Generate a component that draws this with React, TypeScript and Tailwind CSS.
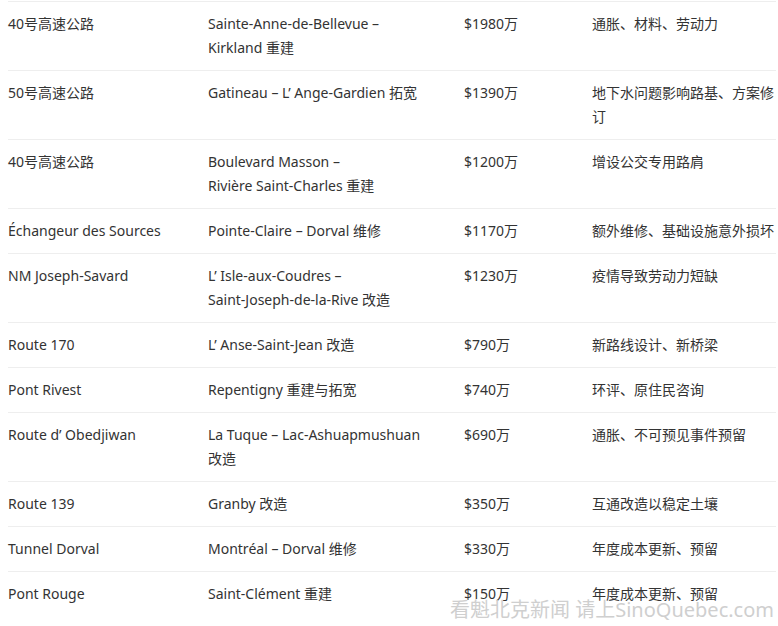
const rows: { name: string; project: string[]; cost: string; reason: string[] }[] = [
  { name: '40号高速公路', project: ['Sainte-Anne-de-Bellevue –', 'Kirkland 重建'], cost: '$1980万', reason: ['通胀、材料、劳动力'] },
  { name: '50号高速公路', project: ['Gatineau – L’ Ange-Gardien 拓宽'], cost: '$1390万', reason: ['地下水问题影响路基、方案修', '订'] },
  { name: '40号高速公路', project: ['Boulevard Masson –', 'Rivière Saint-Charles 重建'], cost: '$1200万', reason: ['增设公交专用路肩'] },
  { name: 'Échangeur des Sources', project: ['Pointe-Claire – Dorval 维修'], cost: '$1170万', reason: ['额外维修、基础设施意外损坏'] },
  { name: 'NM Joseph-Savard', project: ['L’ Isle-aux-Coudres –', 'Saint-Joseph-de-la-Rive 改造'], cost: '$1230万', reason: ['疫情导致劳动力短缺'] },
  { name: 'Route 170', project: ['L’ Anse-Saint-Jean 改造'], cost: '$790万', reason: ['新路线设计、新桥梁'] },
  { name: 'Pont Rivest', project: ['Repentigny 重建与拓宽'], cost: '$740万', reason: ['环评、原住民咨询'] },
  { name: 'Route d’ Obedjiwan', project: ['La Tuque – Lac-Ashuapmushuan', '改造'], cost: '$690万', reason: ['通胀、不可预见事件预留'] },
  { name: 'Route 139', project: ['Granby 改造'], cost: '$350万', reason: ['互通改造以稳定土壤'] },
  { name: 'Tunnel Dorval', project: ['Montréal – Dorval 维修'], cost: '$330万', reason: ['年度成本更新、预留'] },
  { name: 'Pont Rouge', project: ['Saint-Clément 重建'], cost: '$150万', reason: ['年度成本更新、预留'] },
];

function Lines({ lines }: { lines: string[] }) {
  return (
    <>
      {lines.map((l, i) => (
        <div key={i} className="whitespace-nowrap">
          {l}
        </div>
      ))}
    </>
  );
}

export default function App() {
  return (
    <div
      className="relative h-[626px] w-[778px] overflow-hidden bg-white text-[14px] leading-6 text-[#333]"
      style={{ fontFamily: '"Noto Sans", "Noto Sans CJK SC", sans-serif' }}
    >
      <div className="ml-2 w-[768px] border-t border-[#eeeeee] mt-px">
        {rows.map((r, i) => (
          <div
            key={i}
            className="grid grid-cols-[200px_256px_128px_184px] border-b border-[#eeeeee] py-2.5 last:border-b-0"
          >
            <div>{r.name}</div>
            <div>
              <Lines lines={r.project} />
            </div>
            <div>{r.cost}</div>
            <div>
              <Lines lines={r.reason} />
            </div>
          </div>
        ))}
      </div>
      {/* site watermark */}
      <div className="absolute right-1 bottom-[4px] text-[20px] leading-6 text-[#cfcfcf] whitespace-nowrap">
        看魁北克新闻 请上SinoQuebec.com
      </div>
    </div>
  );
}
